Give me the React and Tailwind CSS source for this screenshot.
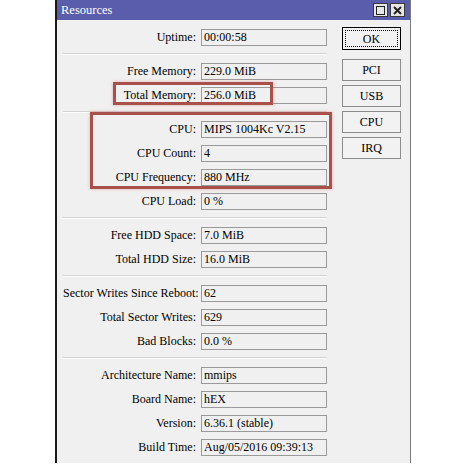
import React from "react";

const groups = [
    [["Uptime", "00:00:58"]],
    [
        ["Free Memory", "229.0 MiB"],
        ["Total Memory", "256.0 MiB"],
    ],
    [
        ["CPU", "MIPS 1004Kc V2.15"],
        ["CPU Count", "4"],
        ["CPU Frequency", "880 MHz"],
        ["CPU Load", "0 %"],
    ],
    [
        ["Free HDD Space", "7.0 MiB"],
        ["Total HDD Size", "16.0 MiB"],
    ],
    [
        ["Sector Writes Since Reboot", "62"],
        ["Total Sector Writes", "629"],
        ["Bad Blocks", "0.0 %"],
    ],
    [
        ["Architecture Name", "mmips"],
        ["Board Name", "hEX"],
        ["Version", "6.36.1 (stable)"],
        ["Build Time", "Aug/05/2016 09:39:13"],
    ],
];

const Row = ({ label, value }) => (
    <div className="flex h-[24px] items-center gap-[5px]">
        <div className="w-[133px] text-right whitespace-nowrap">{label}:</div>
        <div className="flex h-[17px] w-[126px] items-center border border-[#9a9a9a] bg-[#f0f0f0] px-[2px] whitespace-nowrap leading-none">
            {value}
        </div>
    </div>
);

const Separator = () => (
    <div className="flex h-[10px] items-center">
        <div className="h-[2px] w-[264px] border-t border-[#d4d4d4] border-b border-b-white" />
    </div>
);

const Button = ({ children }) => (
    <div className="flex h-[22px] w-[59px] items-center justify-center border border-[#8c8c8c] bg-[#f2f2f2]">
        {children}
    </div>
);

export default function App() {
    return (
        <div
            className="relative h-[466px] w-[466px] overflow-hidden bg-white text-[12px] text-black"
            style={{ fontFamily: '"Liberation Serif", "Times New Roman", serif' }}
        >
            <div className="ml-[55px] flex h-[463px] w-[356px] flex-col border-l-2 border-r border-l-[#1a1a1a] border-r-[#7a7a7a] bg-[#f0f0f0]">
                {/* Title bar */}
                <div className="flex h-[20px] items-center justify-between bg-[#595dab] pl-[4px] pr-[5px] text-white">
                    <span className="text-[12.5px]">Resources</span>
                    <div className="flex gap-[2px]">
                        <div className="flex h-[14px] w-[15px] items-center justify-center border border-[#3a3a3a] bg-[#e6e6e6]">
                            <div className="h-[9px] w-[9px] border border-[#222]" />
                        </div>
                        <div className="flex h-[14px] w-[15px] items-center justify-center border border-[#3a3a3a] bg-[#e6e6e6]">
                            <svg width="9" height="9" viewBox="0 0 9 9">
                                <path d="M1 1 L8 8 M8 1 L1 8" stroke="#222" strokeWidth="2" />
                            </svg>
                        </div>
                    </div>
                </div>

                <div className="flex">
                    {/* Fields */}
                    <div className="pl-[6px] pt-[5px]">
                        {groups.map((group, gi) => (
                            <React.Fragment key={gi}>
                                {gi > 0 && <Separator />}
                                {group.map(([label, value]) => (
                                    <Row key={label} label={label} value={value} />
                                ))}
                            </React.Fragment>
                        ))}
                    </div>

                    {/* Buttons */}
                    <div className="ml-[15px] flex flex-col gap-[4px] pt-[7px]">
                        <div className="mb-[5px] flex h-[23px] w-[59px] items-center justify-center border border-black bg-[#f2f2f2] p-[2px]">
                            <div className="flex h-full w-full items-center justify-center border border-dotted border-black">
                                OK
                            </div>
                        </div>
                        <Button>PCI</Button>
                        <Button>USB</Button>
                        <Button>CPU</Button>
                        <Button>IRQ</Button>
                    </div>
                </div>
            </div>

            {/* Annotation boxes */}
            <div className="absolute left-[113px] top-[82px] h-[23px] w-[160px] border-[3px] border-[#a8514c] shadow-[0_0_3px_rgba(230,120,120,0.6)]" />
            <div className="absolute left-[90px] top-[112px] h-[77px] w-[242px] border-[3px] border-[#a8514c] shadow-[0_0_3px_rgba(230,120,120,0.6)]" />
        </div>
    );
}
